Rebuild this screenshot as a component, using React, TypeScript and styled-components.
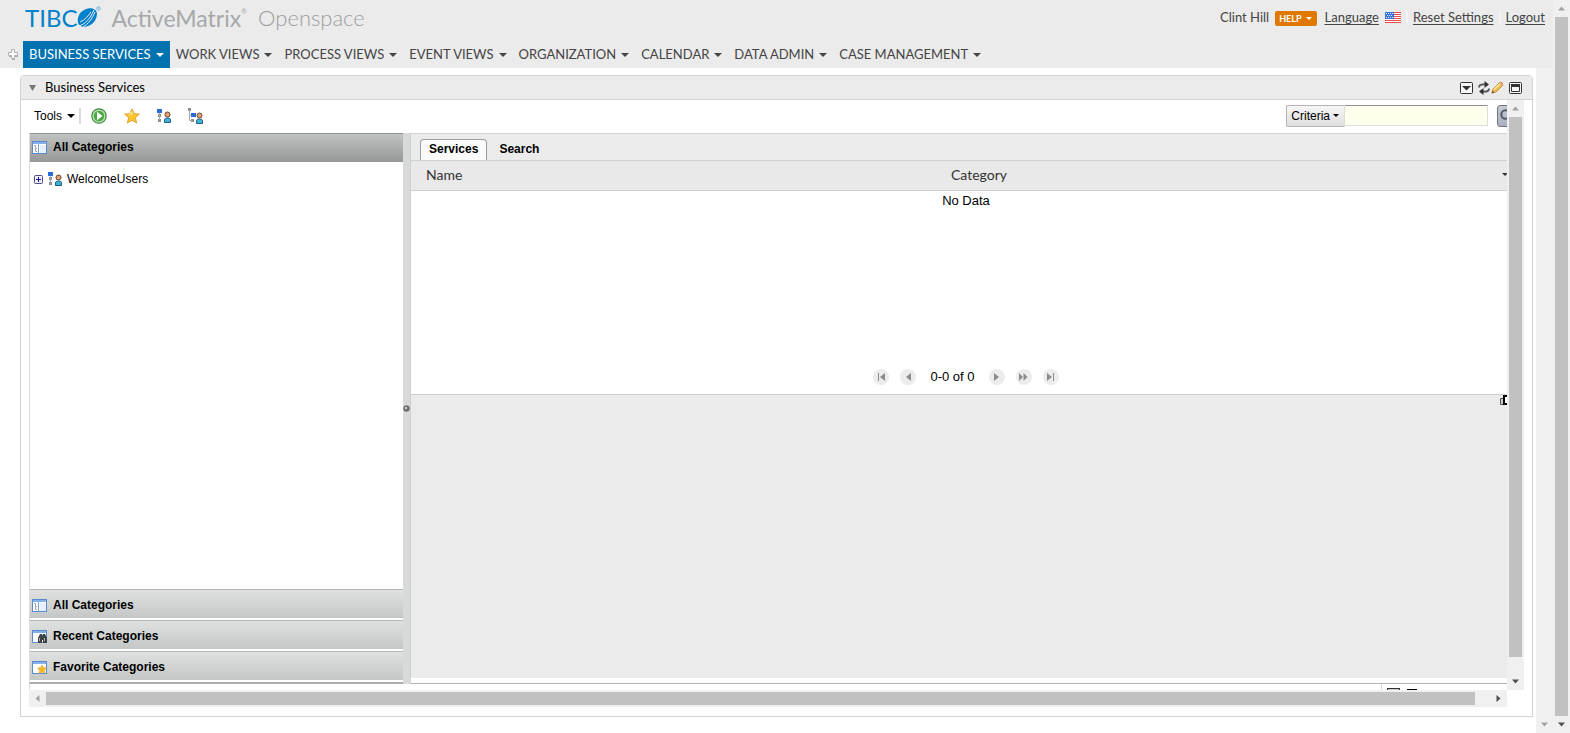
import React from "react";
import styled, { createGlobalStyle, css } from "styled-components";

const SANS = '"Liberation Sans", Arial, sans-serif';
const HUMANIST = 'Lato, "Open Sans", sans-serif';

const GlobalStyle = createGlobalStyle`
  *, *::before, *::after { box-sizing: border-box; }
  body {
    margin: 0;
    overflow: hidden;
    background: #fff;
    color: #000;
    font: 12px/16px ${SANS};
  }
  button, input { font: inherit; color: inherit; }
  button { margin: 0; padding: 0; border: 0; background: none; }
  svg { display: block; flex: none; }
`;

/* ---------- scroll bars ---------- */

const Track = styled.div<{ $horizontal?: boolean }>`
  display: flex;
  flex: none;
  flex-direction: ${(p) => (p.$horizontal ? "row" : "column")};
  align-items: center;
  justify-content: space-between;
  ${(p) => (p.$horizontal ? "height: 17px;" : "width: 17px;")}
  background: #f0f0f0;
`;

const TrackEnd = styled.div`
  display: grid;
  place-items: center;
  flex: none;
  width: 17px;
  height: 17px;
`;

const Thumb = styled.div<{ $horizontal?: boolean; $rest: number }>`
  flex: 1;
  ${(p) =>
    p.$horizontal
      ? css`height: 13px; margin-right: ${p.$rest}px;`
      : css`width: 13px; margin-bottom: ${p.$rest}px;`}
  background: #c1c1c1;
`;

type Direction = "up" | "down" | "left" | "right";
const ANGLE: Record<Direction, number> = { down: 0, left: 90, up: 180, right: 270 };

const Arrow = ({ to, color }: { to: Direction; color: string }) => (
  <svg width="9" height="9" viewBox="0 0 9 9" aria-hidden="true">
    <path d="M1 2.500h7L4.500 6.500z" fill={color} transform={`rotate(${ANGLE[to]} 4.5 4.5)`} />
  </svg>
);

interface ScrollBarProps {
  horizontal?: boolean;
  disabled?: boolean;
  rest?: number;
}

const ScrollBar = ({ horizontal, disabled, rest = 0 }: ScrollBarProps) => (
  <Track $horizontal={horizontal} aria-hidden="true">
    <TrackEnd>{!disabled && <Arrow to={horizontal ? "left" : "up"} color="#a3a3a3" />}</TrackEnd>
    {!disabled && <Thumb $horizontal={horizontal} $rest={rest} />}
    <TrackEnd>
      <Arrow to={horizontal ? "right" : "down"} color={disabled ? "#a3a3a3" : "#505050"} />
    </TrackEnd>
  </Track>
);

/* ---------- page frame ---------- */

const Page = styled.div`
  display: flex;
  height: 100vh;
`;

const Column = styled.div`
  display: flex;
  flex: 1;
  flex-direction: column;
  min-width: 0;
`;

const Below = styled.div`
  display: flex;
  flex: 1;
  min-height: 0;
`;

const Main = styled.main`
  display: flex;
  flex: 1;
  min-width: 0;
  padding: 7px 3px 16px 20px;
`;

/* ---------- header ---------- */

const Header = styled.header`
  background: #ebebeb;
  color: #444;
  font-family: ${HUMANIST};
`;

const TopRow = styled.div`
  display: flex;
  align-items: flex-start;
  justify-content: space-between;
  height: 41px;
  padding: 3px 8px 0 25px;
`;

const Brand = styled.div`
  display: flex;
  align-items: flex-start;
  line-height: 30px;
  white-space: nowrap;
`;

const Tibco = styled.span`
  color: #0081cc;
  font-size: 24px;
`;

const Product = styled.span`
  margin-left: 10px;
  color: #a6a8aa;
  font-size: 23px;
`;

const Registered = styled.sup`
  width: 5px;
  color: #a6a8aa;
  font-size: 7px;
  line-height: 16px;
`;

const Suite = styled.span`
  margin-left: 12px;
  color: #9c9e9f;
  font-size: 22px;
  font-weight: 300;
`;

const Account = styled.div`
  display: flex;
  align-items: center;
  margin-top: 4px;
  font-size: 13px;
  line-height: 20px;
`;

const AccountLink = styled.a`
  color: #444;
  text-underline-offset: 2px;
`;

const HelpButton = styled.button`
  display: flex;
  align-items: center;
  gap: 4px;
  height: 15px;
  margin: 2px 8px 0 6px;
  padding: 0 5px 0 4px;
  border-radius: 2px;
  background: #e07800;
  color: #fff;
  font: bold 9px/15px Lato, sans-serif;
`;

const Flag = styled.span`
  margin-left: 6px;
`;

const Divider = styled.span`
  width: 2px;
  height: 12px;
  margin: 0 5px;
  background: #f4f4f4;
`;

const Nav = styled.nav`
  display: flex;
  align-items: center;
  padding-left: 7px;
`;

const AddTab = styled.button`
  width: 16px;
  height: 16px;
`;

const NavItem = styled.button<{ $active?: boolean }>`
  display: flex;
  align-items: center;
  gap: 5px;
  height: 27px;
  padding: 0 6px;
  background: ${(p) => (p.$active ? "#0072b0" : "transparent")};
  color: ${(p) => (p.$active ? "#fff" : "#444")};
  font: 13px/27px ${HUMANIST};
  white-space: nowrap;
`;

const Caret = ({ size = 8 }: { size?: number }) => (
  <svg width={size} height={size / 2} viewBox="0 0 8 4" aria-hidden="true">
    <path d="M0 0h8L4 4z" fill="currentColor" />
  </svg>
);

/* ---------- portlet panel ---------- */

const Panel = styled.section`
  display: flex;
  flex: 1;
  flex-direction: column;
  min-width: 0;
  border: 1px solid #d3d3d3;
  border-radius: 4px 4px 0 0;
`;

const PanelHeader = styled.div`
  display: flex;
  align-items: center;
  flex: none;
  height: 24px;
  padding: 0 10px 0 8px;
  border-bottom: 1px solid #d3d3d3;
  border-radius: 3px 3px 0 0;
  background: #ebebeb;
`;

const PanelTitle = styled.h1`
  flex: 1;
  margin: 0 0 0 9px;
  padding-bottom: 2px;
  font: 13px/20px ${HUMANIST};
`;

const IconButton = styled.button<{ $gap?: number }>`
  display: grid;
  place-items: center;
  margin-left: ${(p) => p.$gap ?? 0}px;
`;

const PanelBody = styled.div`
  display: grid;
  grid-template-columns: minmax(0, 1fr) 17px;
  grid-template-rows: minmax(0, 1fr) 17px;
  flex: 1;
  min-height: 0;
  padding: 0 8px 9px;
`;

const Viewport = styled.div`
  display: flex;
  overflow: hidden;
`;

const Canvas = styled.div`
  display: flex;
  flex: none;
  flex-direction: column;
  width: calc(100% + 14px);
`;

const Toolbar = styled.div`
  display: flex;
  align-items: center;
  flex: none;
  height: 33px;
  padding: 0 0 2px 5px;
`;

const ToolsButton = styled.button`
  display: flex;
  align-items: center;
  gap: 5px;
  height: 16px;
  padding-right: 4px;
  border-right: 2px solid #d8dadb;
`;

const ToolIcons = styled.div`
  display: flex;
  flex: 1;
  gap: 17px;
  padding-left: 10px;
`;

const SearchForm = styled.form`
  display: flex;
  align-items: flex-start;
`;

const CriteriaButton = styled.button`
  display: flex;
  align-items: center;
  gap: 3px;
  height: 22px;
  padding: 0 5px 0 4px;
  border: 1px solid #b4b4b4;
  border-right-color: #ddd;
  border-radius: 2px 0 0 2px;
  background: linear-gradient(#f6f6f6, #dedede);
`;

const SearchInput = styled.input`
  width: 143px;
  height: 21px;
  padding: 0 4px;
  border: 1px solid #ddd;
  border-top-color: #8e8e8e;
  border-left: 0;
  background: #ffffee;
`;

const SearchButton = styled.button`
  display: flex;
  align-items: center;
  width: 24px;
  height: 22px;
  margin-left: 9px;
  padding-left: 2px;
  border: 1px solid #70757f;
  border-radius: 3px;
  background: linear-gradient(#c4c9d2, #aab0bd);
`;

const Split = styled.div`
  display: flex;
  flex: 1;
  min-height: 0;
`;

/* ---------- category accordion ---------- */

const Accordion = styled.aside`
  display: flex;
  flex: none;
  flex-direction: column;
  width: 374px;
  border-left: 1px solid #ddd;
  border-bottom: 2px solid #aeaeae;
`;

const AccordionHeader = styled.button<{ $open?: boolean }>`
  display: flex;
  align-items: center;
  gap: 6px;
  flex: none;
  height: 29px;
  padding: ${(p) => (p.$open ? "0 2px 2px" : "2px 2px 0")};
  border-top: 1px solid ${(p) => (p.$open ? "#8f9391" : "#b4b7b6")};
  background: ${(p) =>
    p.$open ? "linear-gradient(#bfc3c2, #959897)" : "linear-gradient(#dfe1e0, #c5c7c6)"};
  font-weight: bold;
  text-align: left;

  ${(p) => !p.$open && "margin-bottom: 2px;"}
`;

const Tree = styled.ul`
  flex: 1;
  margin: 0;
  padding: 9px 4px;
  list-style: none;
`;

const TreeNode = styled.li`
  display: flex;
  align-items: center;
  gap: 5px;
`;

const Splitter = styled.div`
  display: flex;
  align-items: center;
  flex: none;
  width: 8px;
  border-right: 1px solid #cfd1d0;
  background: #d8dad9;
`;

/* ---------- services grid ---------- */

const Detail = styled.div`
  display: flex;
  flex: 1;
  flex-direction: column;
  min-width: 0;
  padding-bottom: 5px;
  border-top: 1px solid #d0d2d4;
  border-bottom: 1px solid #b0b0b0;
`;

const Tabs = styled.div`
  display: flex;
  align-items: flex-end;
  flex: none;
  height: 27px;
  padding-left: 9px;
  border-bottom: 1px solid #cfcfcf;
  background: #ebebeb;
`;

const Tab = styled.button<{ $active?: boolean }>`
  height: 21px;
  padding: 0 8px 3px;
  border: 1px solid ${(p) => (p.$active ? "#9c9c9c" : "transparent")};
  border-bottom: 0;
  border-radius: 4px 4px 0 0;
  background: ${(p) => (p.$active ? "#fafafa" : "transparent")};
  font-weight: bold;

  & + & { margin-left: 3px; }
`;

const Grid = styled.table`
  flex: none;
  width: 100%;
  border-collapse: separate;
  border-spacing: 0;
  table-layout: fixed;
  font-size: 13px;
`;

const HeadCell = styled.th<{ $width?: string }>`
  width: ${(p) => p.$width ?? "auto"};
  height: 30px;
  padding: 0 0 1px 15px;
  border-bottom: 1px solid #cfcfcf;
  background: #e9e9e9;
  color: #333;
  font: 14px/20px ${HUMANIST};
  text-align: left;
`;

const EmptyCell = styled.td`
  padding: 2px 0;
  text-align: center;
`;

const ColumnMenu = styled.button`
  display: block;
  margin: 0 0 2px 2px;
`;

const Pager = styled.div`
  display: flex;
  align-items: flex-start;
  justify-content: center;
  flex: none;
  gap: 11px;
  height: 25px;
  margin-top: 158px;
  font-size: 13px;
`;

const PagerButton = styled.button`
  display: grid;
  place-items: center;
  width: 16px;
  height: 16px;
  border-radius: 50%;
  background: #ececec;
  color: #8c8c8c;
`;

const PagerText = styled.span`
  padding: 0 3px;
`;

const Preview = styled.div`
  display: flex;
  flex: 1;
  align-items: flex-start;
  justify-content: flex-end;
  border-top: 1px solid #cfcfcf;
  background: #ebebeb;
`;

const StatusBar = styled.div`
  display: flex;
  flex: none;
  justify-content: flex-end;
  height: 6px;
  border-left: 1px solid #ddd;
`;

const StatusIcons = styled.div`
  display: flex;
  gap: 7px;
  width: 140px;
  padding: 4px 0 0 5px;
  border-left: 1px solid #ddd;
`;

/* ---------- icons ---------- */

const TibcoMark = () => (
  <svg width="24" height="26" viewBox="0 -1 24 26" aria-hidden="true">
    <path d="M11 4.500C16 3.500 20 6 20 10C19.500 18 13 23 6 23C2 22 0 19 1 14C2 9 6 5.500 11 4.500Z" fill="#0081cc" />
    <path d="M2 22C8 20 13 15 17 6M6 23C11 20 15 15 18 8M3 18C8 16 11 12 14 8" fill="none" stroke="#ebebeb" strokeWidth="1" />
    <circle cx="21.500" cy="4.500" r="1.800" fill="none" stroke="#69b3dd" strokeWidth=".8" />
    <path d="M21 5.500V3.500h1v1h-1l1 1" fill="none" stroke="#69b3dd" strokeWidth=".4" />
  </svg>
);

const PlusMark = () => (
  <svg width="14" height="14" viewBox="0 2 14 14" aria-hidden="true">
    <path d="M4.500 4.500h3v3h3v3h-3v3h-3v-3h-3v-3h3z" fill="#aaa" transform="translate(.5 .5)" />
    <path d="M4.500 3.500h3v3h3v3h-3v3h-3v-3h-3v-3h3z" fill="#f8f8f8" stroke="#b4b4b4" />
  </svg>
);

const FlagIcon = () => (
  <svg width="16" height="11" viewBox="0 0 16 11" role="img" aria-label="English (US)">
    <path fill="#fff" d="M0 0h16v11H0z" />
    <path stroke="#e8484a" d="M0 .5h16M0 2.500h16M0 4.500h16M0 6.500h16M0 8.500h16M0 10.500h16" />
    <path fill="#3a74d8" d="M0 0h9v7H0z" />
    <path stroke="#dce8ff" strokeDasharray="1 1" d="M1 1.500h7M2 3.500h6M1 5.500h7" />
  </svg>
);

const MenuBoxIcon = () => (
  <svg width="13" height="12" viewBox="0 0 13 12" aria-hidden="true">
    <rect x=".5" y=".5" width="12" height="11" rx="1" fill="#f8f8f8" stroke="#333" />
    <path d="M2 4h9L6.500 8.500z" fill="#333" />
  </svg>
);

const RefreshIcon = () => (
  <svg width="12" height="14" viewBox="0 0 12 14" aria-hidden="true">
    <path d="M1 6.500C1 4 3 3 7 3.500M11 7.500c0 2.500-2 3.500-6 3" fill="none" stroke="#555" strokeWidth="1.800" />
    <path d="M6.500 0l4.500 3.500-4.500 3.500zM5.500 14L1 10.500 5.500 7z" fill="#333" />
  </svg>
);

const PencilIcon = () => (
  <svg width="13" height="13" viewBox="0 0 13 13" aria-hidden="true">
    <path d="M1 12l1-4 7-7q3 0 3 3l-7 7z" fill="#f5bd4a" stroke="#bb7d2f" strokeWidth=".8" />
    <path d="M3 8.500l6-6" stroke="#fff0b4" strokeWidth="1.200" />
    <path d="M9 1q3 0 3 3l-1 1-3-3z" fill="#eaa07c" />
    <path d="M.5 12.500L1.500 9.500l2 2z" fill="#6a5640" />
  </svg>
);

const WindowIcon = () => (
  <svg width="13" height="12" viewBox="0 0 13 12" aria-hidden="true">
    <rect x=".5" y=".5" width="12" height="11" rx="1" fill="#f8f8f8" stroke="#333" />
    <path d="M2.500 3h8v6.500h-8z" fill="none" stroke="#333" />
    <path d="M2 2h9v3H2z" fill="#333" />
  </svg>
);

const PlayIcon = () => (
  <svg width="16" height="16" viewBox="0 0 16 16" aria-hidden="true">
    <circle cx="8" cy="8" r="7.200" fill="#b9dfb2" stroke="#3f8f3c" strokeWidth="1.200" />
    <circle cx="8" cy="8" r="5.200" fill="#4aa845" />
    <path d="M6 3.800L11.500 8 6 12.200z" fill="#fff" />
  </svg>
);

const StarIcon = () => (
  <svg width="16" height="16" viewBox="0 0 16 16" aria-hidden="true">
    <path d="M8 .8l2.200 4.800 5.200.5-4 3.600 1.300 5.400L8 12.400l-4.700 2.700 1.300-5.400-4-3.600 5.200-.5z" fill="#f8c431" stroke="#d99a26" strokeWidth=".8" />
    <path d="M8 3l1.300 3.500-5 .5z" fill="#fde48a" />
  </svg>
);

const Person = () => (
  <g>
    <path d="M7.500 14.500v-3q0-1.500 3-1.500t3 1.500v3z" fill="#3fb0dc" stroke="#1d5f85" />
    <circle cx="10.500" cy="6.500" r="2.500" fill="#e0a478" stroke="#6b4128" />
  </g>
);

const UserTreeIcon = () => (
  <svg width="14" height="16" viewBox="0 0 14 16" aria-hidden="true">
    <path d="M1 6h3v3H1zM1 11h3v3H1z" fill="#8e8e8e" />
    <path d="M2.500 4v8" stroke="#aaa" />
    <path d="M0 1h5v4H0z" fill="#2a6bdc" />
    <Person />
  </svg>
);

const SubTreeIcon = () => (
  <svg width="16" height="16" viewBox="0 0 16 16" aria-hidden="true">
    <path d="M0 0h3v3H0zM3 11h3v3H3z" fill="#8e8e8e" />
    <path d="M1.500 2v10.500H4M1.500 7H4" fill="none" stroke="#aaa" />
    <path d="M3 5h5v4H3z" fill="#2a6bdc" />
    <g transform="translate(1 1)"><Person /></g>
  </svg>
);

type CategoryKind = "all" | "recent" | "favorite";

const CategoryIcon = ({ kind }: { kind: CategoryKind }) => (
  <svg width="15" height="13" viewBox="0 0 15 13" aria-hidden="true">
    <rect x=".5" y=".5" width="14" height="12" fill="#fff" stroke="#5a8bd0" />
    <path d="M1 1h13v2H1z" fill="#86b0ea" />
    {kind === "all" && (
      <>
        <path d="M6.500 3v9" stroke="#7ba2dc" />
        <path d="M8 4h6v8H8z" fill="#e6effc" />
        <path d="M2 4.500h1.500v6H5M3.500 7.500H5" fill="none" stroke="#aaa" />
      </>
    )}
    {kind === "recent" && (
      <>
        <path d="M6 13V8l2-4h2l.5 2 .5-2h2l2 4v5h-4v-3h-1v3z" fill="#3c4248" />
        <path d="M7.500 8v3M12.500 8v3" stroke="#a8b4bd" />
      </>
    )}
    {kind === "favorite" && (
      <path d="M10 4l1.400 2.700 3.100.3-2.200 2.200.7 3.300-3-1.500-3 1.500.7-3.300L5.500 7l3.100-.3z" fill="#f8bb22" stroke="#dc9a1c" strokeWidth=".5" />
    )}
  </svg>
);

const ExpandIcon = () => (
  <svg width="9" height="9" viewBox="0 0 9 9" aria-hidden="true">
    <rect x=".5" y=".5" width="8" height="8" rx="1" fill="#eef0ff" stroke="#4a4a8c" />
    <path d="M2 4.500h5M4.500 2v5" stroke="#1616a8" />
  </svg>
);

const Knob = () => (
  <svg width="7" height="8" viewBox="0 0 7 8" aria-hidden="true">
    <circle cx="3.500" cy="3.500" r="3.200" fill="#6e6e6e" />
    <circle cx="3" cy="3" r="1.200" fill="#d0d0d0" />
  </svg>
);

const MagnifierIcon = () => (
  <svg width="14" height="14" viewBox="0 0 14 14" aria-hidden="true">
    <circle cx="5.500" cy="5.500" r="4.200" fill="none" stroke="#555b66" strokeWidth="2" />
    <path d="M9 9l4 4" stroke="#555b66" strokeWidth="2" />
  </svg>
);

const RestoreIcon = () => (
  <svg width="21" height="11" viewBox="0 0 21 11" aria-hidden="true">
    <path d="M.5 3.500h5v6h-5z" fill="#ccc" stroke="#555" />
    <path d="M4 1h9v8H4z" fill="#fff" stroke="#000" strokeWidth="2" />
  </svg>
);

const StatusBoxIcon = () => (
  <svg width="13" height="2" viewBox="0 0 13 2" aria-hidden="true">
    <path d="M0 0h13v1H0z" fill="#333" />
    <path d="M0 1h1v1H0zM12 1h1v1h-1z" fill="#333" />
    <path d="M1 1h11v1H1z" fill="#ccc" />
  </svg>
);

const StatusLineIcon = () => (
  <svg width="10" height="2" viewBox="0 0 10 2" aria-hidden="true">
    <path d="M0 1h10v1H0z" fill="#000" />
  </svg>
);

const PAGER_SHAPES = {
  First: "M1 0h1v8H1zM8 0v8L3 4z",
  Previous: "M7 0v8L2 4z",
  Next: "M2 0v8l5-4z",
  "Skip forward": "M0 0v8l4-4zM4.500 0v8l4-4z",
  Last: "M1 0v8l5-4zM7 0h1v8H7z",
};

const PagerControl = ({ name }: { name: keyof typeof PAGER_SHAPES }) => (
  <PagerButton type="button" aria-label={name}>
    <svg width="9" height="8" viewBox="0 0 9 8" aria-hidden="true">
      <path d={PAGER_SHAPES[name]} fill="currentColor" />
    </svg>
  </PagerButton>
);

/* ---------- data ---------- */

const NAV = [
  "BUSINESS SERVICES",
  "WORK VIEWS",
  "PROCESS VIEWS",
  "EVENT VIEWS",
  "ORGANIZATION",
  "CALENDAR",
  "DATA ADMIN",
  "CASE MANAGEMENT",
];

const CATEGORIES: { label: string; kind: CategoryKind }[] = [
  { label: "All Categories", kind: "all" },
  { label: "Recent Categories", kind: "recent" },
  { label: "Favorite Categories", kind: "favorite" },
];

export default function App() {
  return (
    <Page>
      <GlobalStyle />
      <Column>
        <Header>
          <TopRow>
            <Brand>
              <Tibco>TIBC</Tibco>
              <TibcoMark />
              <Product>ActiveMatrix</Product>
              <Registered>®</Registered>
              <Suite>Openspace</Suite>
            </Brand>
            <Account>
              <span>Clint Hill</span>
              <HelpButton type="button">
                HELP
                <Caret size={6} />
              </HelpButton>
              <AccountLink href="#language">Language</AccountLink>
              <Flag><FlagIcon /></Flag>
              <Divider />
              <AccountLink href="#reset">Reset Settings</AccountLink>
              <Divider />
              <AccountLink href="#logout">Logout</AccountLink>
            </Account>
          </TopRow>
          <Nav>
            <AddTab type="button" aria-label="Add tab"><PlusMark /></AddTab>
            {NAV.map((label, i) => (
              <NavItem key={label} type="button" $active={i === 0}>
                {label}
                <Caret />
              </NavItem>
            ))}
          </Nav>
        </Header>
        <Below>
          <Main>
            <Panel>
              <PanelHeader>
                <IconButton type="button" aria-label="Collapse">
                  <svg width="7" height="6" viewBox="0 0 7 6"><path d="M0 0h7L3.500 6z" fill="#777" /></svg>
                </IconButton>
                <PanelTitle>Business Services</PanelTitle>
                <IconButton type="button" aria-label="Menu"><MenuBoxIcon /></IconButton>
                <IconButton type="button" aria-label="Refresh" $gap={5}><RefreshIcon /></IconButton>
                <IconButton type="button" aria-label="Edit" $gap={1}><PencilIcon /></IconButton>
                <IconButton type="button" aria-label="Maximize" $gap={5}><WindowIcon /></IconButton>
              </PanelHeader>
              <PanelBody>
                <Viewport>
                  <Canvas>
                    <Toolbar>
                      <ToolsButton type="button">Tools<Caret /></ToolsButton>
                      <ToolIcons>
                        <IconButton type="button" aria-label="Start service"><PlayIcon /></IconButton>
                        <IconButton type="button" aria-label="Add favorite"><StarIcon /></IconButton>
                        <IconButton type="button" aria-label="Show users"><UserTreeIcon /></IconButton>
                        <IconButton type="button" aria-label="Show groups"><SubTreeIcon /></IconButton>
                      </ToolIcons>
                      <SearchForm>
                        <CriteriaButton type="button">Criteria<Caret size={6} /></CriteriaButton>
                        <SearchInput type="text" aria-label="Search criteria" />
                        <SearchButton type="button" aria-label="Search"><MagnifierIcon /></SearchButton>
                      </SearchForm>
                    </Toolbar>
                    <Split>
                      <Accordion>
                        <AccordionHeader type="button" $open>
                          <CategoryIcon kind="all" />
                          All Categories
                        </AccordionHeader>
                        <Tree>
                          <TreeNode>
                            <IconButton type="button" aria-label="Expand WelcomeUsers"><ExpandIcon /></IconButton>
                            <UserTreeIcon />
                            WelcomeUsers
                          </TreeNode>
                        </Tree>
                        {CATEGORIES.map((c) => (
                          <AccordionHeader key={c.label} type="button">
                            <CategoryIcon kind={c.kind} />
                            {c.label}
                          </AccordionHeader>
                        ))}
                      </Accordion>
                      <Splitter><Knob /></Splitter>
                      <Detail>
                        <Tabs role="tablist">
                          <Tab type="button" role="tab" aria-selected="true" $active>Services</Tab>
                          <Tab type="button" role="tab" aria-selected="false">Search</Tab>
                        </Tabs>
                        <Grid>
                          <thead>
                            <tr>
                              <HeadCell $width="525px">Name</HeadCell>
                              <HeadCell>Category</HeadCell>
                              <HeadCell $width="36px">
                                <ColumnMenu type="button" aria-label="Columns"><Caret size={6} /></ColumnMenu>
                              </HeadCell>
                            </tr>
                          </thead>
                          <tbody>
                            <tr><EmptyCell colSpan={3}>No Data</EmptyCell></tr>
                          </tbody>
                        </Grid>
                        <Pager>
                          <PagerControl name="First" />
                          <PagerControl name="Previous" />
                          <PagerText>0-0 of 0</PagerText>
                          <PagerControl name="Next" />
                          <PagerControl name="Skip forward" />
                          <PagerControl name="Last" />
                        </Pager>
                        <Preview>
                          <IconButton type="button" aria-label="Restore preview"><RestoreIcon /></IconButton>
                        </Preview>
                      </Detail>
                    </Split>
                    <StatusBar>
                      <StatusIcons><StatusBoxIcon /><StatusLineIcon /></StatusIcons>
                    </StatusBar>
                  </Canvas>
                </Viewport>
                <ScrollBar rest={16} />
                <ScrollBar horizontal rest={15} />
              </PanelBody>
            </Panel>
          </Main>
          <ScrollBar disabled />
        </Below>
      </Column>
      <ScrollBar />
    </Page>
  );
}
